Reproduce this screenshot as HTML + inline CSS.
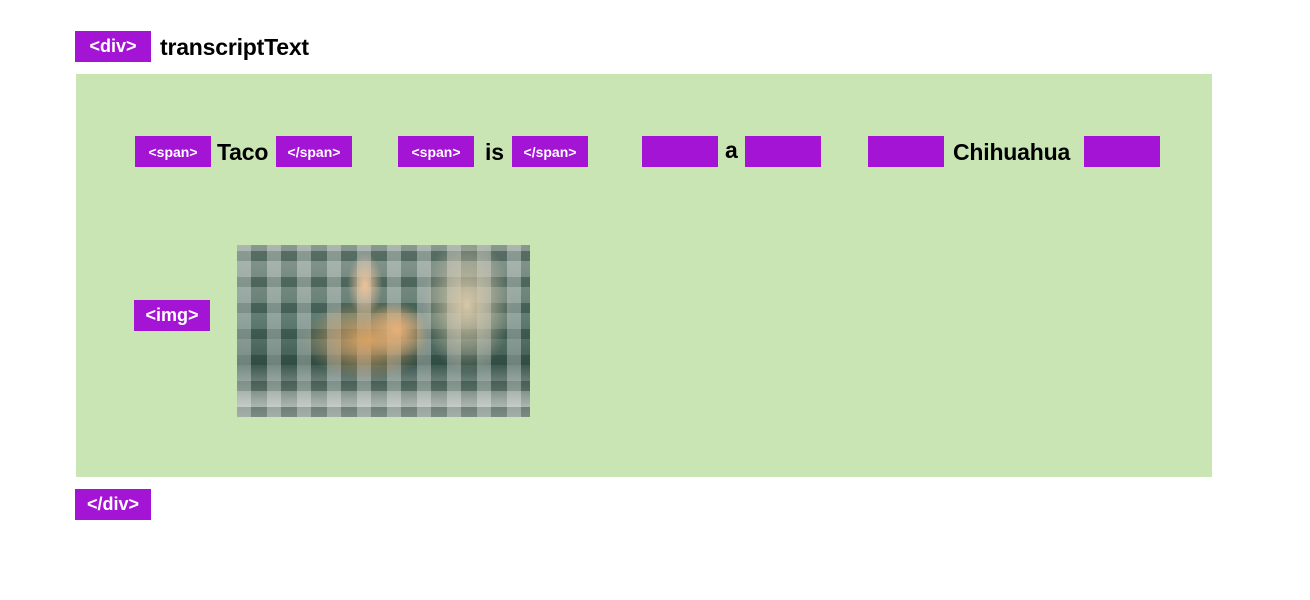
<!DOCTYPE html>
<html><head><style>
body{margin:0;width:1310px;height:600px;background:#fff;position:relative;overflow:hidden;font-family:"Liberation Sans",Arial,sans-serif;font-weight:bold}
.t{position:absolute;background:#a414d5;color:#fff;width:76px;height:31px;display:flex;align-items:center;justify-content:center;font-size:18px}
.s{font-size:14px}
.w{position:absolute;font-size:23px;color:#000;line-height:31px;letter-spacing:-0.2px}
#g{position:absolute;left:76px;top:74px;width:1136px;height:403px;background:#c9e5b4}
#img{position:absolute;left:237px;top:245px;width:293px;height:172px;overflow:hidden;
background:
radial-gradient(ellipse 40px 35px at 160px 85px,#e6b078,transparent 80%),
radial-gradient(ellipse 80px 50px at 130px 95px,#d8a060,transparent 80%),
radial-gradient(ellipse 22px 40px at 128px 40px,#ecc29a,transparent 80%),
radial-gradient(ellipse 60px 90px at 230px 60px,#d8c8a8,transparent 75%),
repeating-linear-gradient(90deg,rgba(255,255,255,.3) 0 14px,transparent 14px 30px),
repeating-linear-gradient(0deg,rgba(30,60,50,.45) 0 10px,transparent 10px 26px),
linear-gradient(180deg,#8a9890 0%,#5e7a70 45%,#3f5a52 70%,#c8ccc6 100%)}
</style></head><body>
<div class="t" style="left:75px;top:31px">&lt;div&gt;</div>
<div class="w" style="left:160px;top:32px">transcriptText</div>
<div id="g"></div>
<div class="t s" style="left:135px;top:136px">&lt;span&gt;</div>
<div class="w" style="left:217px;top:137px">Taco</div>
<div class="t s" style="left:276px;top:136px">&lt;/span&gt;</div>
<div class="t s" style="left:398px;top:136px">&lt;span&gt;</div>
<div class="w" style="left:485px;top:137px">is</div>
<div class="t s" style="left:512px;top:136px">&lt;/span&gt;</div>
<div class="t" style="left:642px;top:136px"></div>
<div class="w" style="left:725px;top:135px">a</div>
<div class="t" style="left:745px;top:136px"></div>
<div class="t" style="left:868px;top:136px"></div>
<div class="w" style="left:953px;top:137px">Chihuahua</div>
<div class="t" style="left:1084px;top:136px"></div>
<div class="t" style="left:134px;top:300px">&lt;img&gt;</div>
<div id="img"></div>
<div class="t" style="left:75px;top:489px">&lt;/div&gt;</div>
</body></html>
